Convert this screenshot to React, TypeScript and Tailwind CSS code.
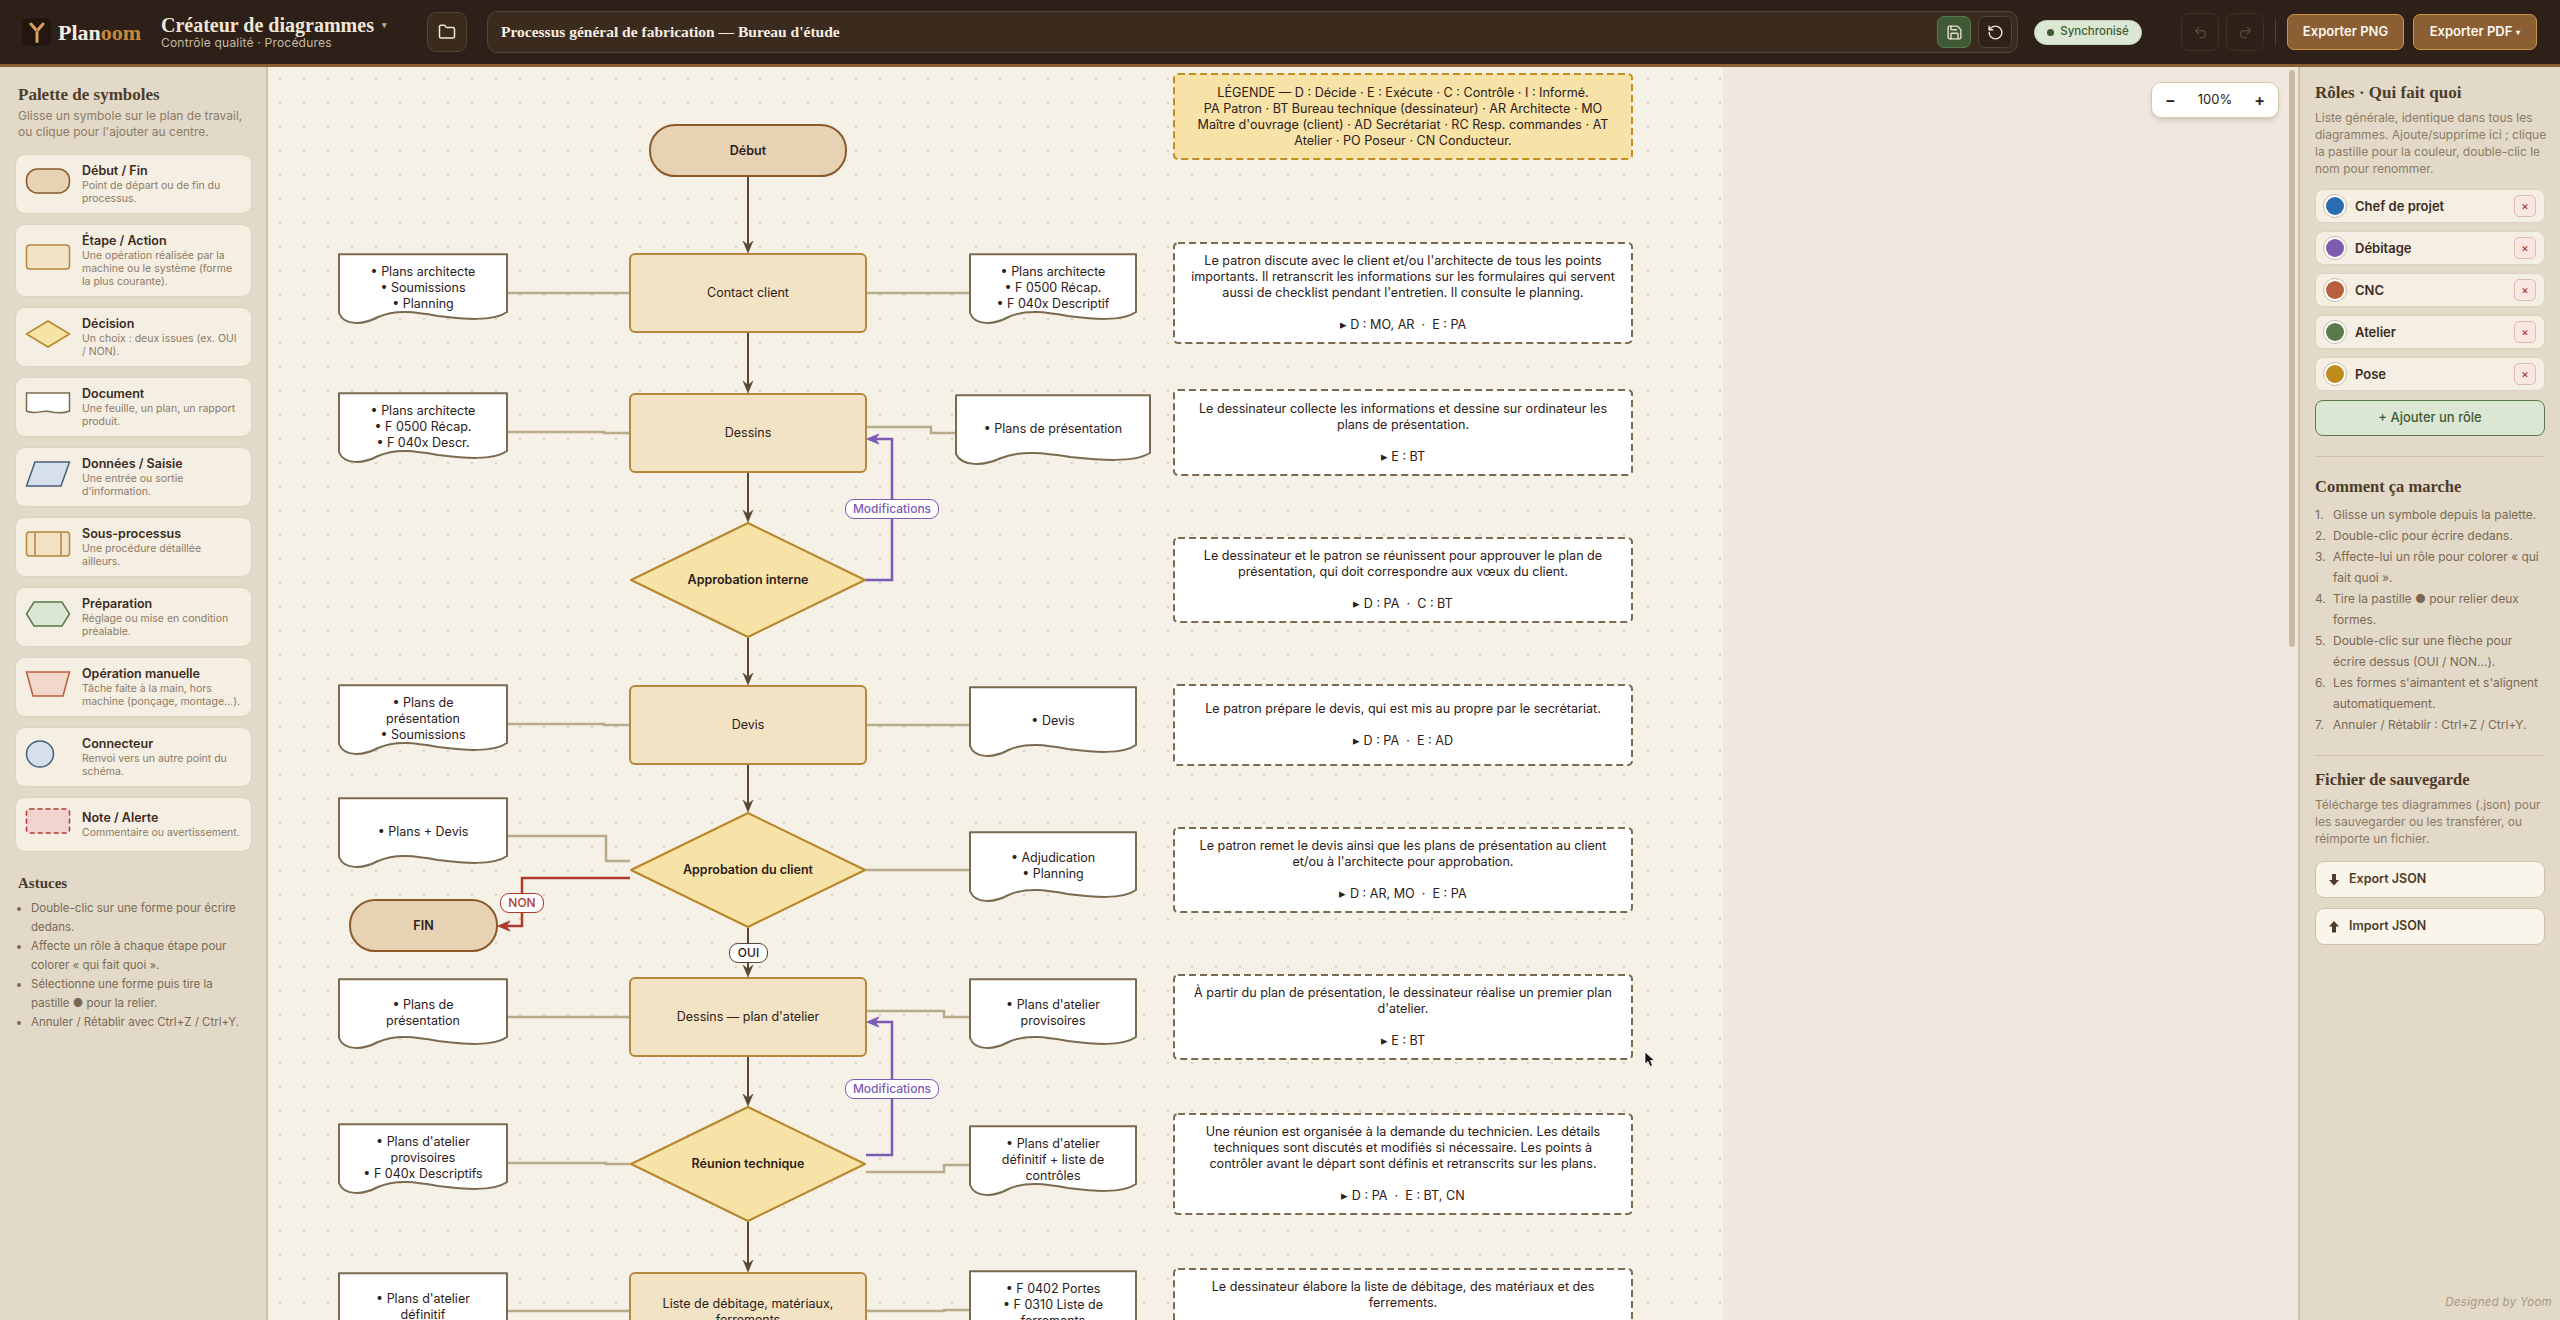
import React from "react";
import { Folder, Save, RotateCcw, Undo2, Redo2 } from "lucide-react";

const serif = "font-['Liberation_Serif',serif]";

// everything on the canvas is in page pixels, the paper starts at 268,67
const OX = 268;
const OY = 67;

const palette = [
  { title: "Début / Fin", desc: "Point de départ ou de fin du\nprocessus.", sym: "pill" },
  { title: "Étape / Action", desc: "Une opération réalisée par la\nmachine ou le système (forme\nla plus courante).", sym: "box" },
  { title: "Décision", desc: "Un choix : deux issues (ex. OUI\n/ NON).", sym: "diamond" },
  { title: "Document", desc: "Une feuille, un plan, un rapport\nproduit.", sym: "doc" },
  { title: "Données / Saisie", desc: "Une entrée ou sortie\nd'information.", sym: "data" },
  { title: "Sous-processus", desc: "Une procédure détaillée\nailleurs.", sym: "sub" },
  { title: "Préparation", desc: "Réglage ou mise en condition\npréalable.", sym: "prep" },
  { title: "Opération manuelle", desc: "Tâche faite à la main, hors\nmachine (ponçage, montage...).", sym: "manual" },
  { title: "Connecteur", desc: "Renvoi vers un autre point du\nschéma.", sym: "conn" },
  { title: "Note / Alerte", desc: "Commentaire ou avertissement.", sym: "note" },
];

const roles = [
  { name: "Chef de projet", color: "bg-[#2b6cb0]" },
  { name: "Débitage", color: "bg-[#7c5bb0]" },
  { name: "CNC", color: "bg-[#b5603a]" },
  { name: "Atelier", color: "bg-[#5a7a4d]" },
  { name: "Pose", color: "bg-[#bf8a1c]" },
];

const steps = [
  "Glisse un symbole depuis la palette.",
  "Double-clic pour écrire dedans.",
  "Affecte-lui un rôle pour colorer « qui\nfait quoi ».",
  "Tire la pastille ● pour relier deux\nformes.",
  "Double-clic sur une flèche pour\nécrire dessus (OUI / NON...).",
  "Les formes s'aimantent et s'alignent\nautomatiquement.",
  "Annuler / Rétablir : Ctrl+Z / Ctrl+Y.",
];

const docs = [
  { x: 338, y: 253, w: 170, text: "• Plans architecte\n• Soumissions\n• Planning" },
  { x: 969, y: 253, w: 168, text: "• Plans architecte\n• F 0500 Récap.\n• F 040x Descriptif" },
  { x: 338, y: 392, w: 170, text: "• Plans architecte\n• F 0500 Récap.\n• F 040x Descr." },
  { x: 955, y: 394, w: 196, text: "• Plans de présentation" },
  { x: 338, y: 684, w: 170, text: "• Plans de\nprésentation\n• Soumissions" },
  { x: 969, y: 686, w: 168, text: "• Devis" },
  { x: 338, y: 797, w: 170, text: "• Plans + Devis" },
  { x: 969, y: 831, w: 168, text: "• Adjudication\n• Planning" },
  { x: 338, y: 978, w: 170, text: "• Plans de\nprésentation" },
  { x: 969, y: 978, w: 168, text: "• Plans d'atelier\nprovisoires" },
  { x: 338, y: 1123, w: 170, text: "• Plans d'atelier\nprovisoires\n• F 040x Descriptifs" },
  { x: 969, y: 1125, w: 168, text: "• Plans d'atelier\ndéfinitif + liste de\ncontrôles" },
  { x: 338, y: 1272, w: 170, text: "• Plans d'atelier\ndéfinitif" },
  { x: 969, y: 1270, w: 168, text: "• F 0402 Portes\n• F 0310 Liste de\nferrements" },
];

const boxes = [
  { y: 253, text: "Contact client" },
  { y: 393, text: "Dessins" },
  { y: 685, text: "Devis" },
  { y: 977, text: "Dessins — plan d'atelier" },
  { y: 1272, text: "Liste de débitage, matériaux,\nferrements" },
];

const diamonds = [
  { y: 522, text: "Approbation interne" },
  { y: 812, text: "Approbation du client" },
  { y: 1106, text: "Réunion technique" },
];

const notes = [
  { y: 242, h: 102, text: "Le patron discute avec le client et/ou l'architecte de tous les points\nimportants. Il retranscrit les informations sur les formulaires qui servent\naussi de checklist pendant l'entretien. Il consulte le planning.\n\n▸ D : MO, AR \u00a0·\u00a0 E : PA" },
  { y: 389, h: 87, text: "Le dessinateur collecte les informations et dessine sur ordinateur les\nplans de présentation.\n\n▸ E : BT" },
  { y: 537, h: 86, text: "Le dessinateur et le patron se réunissent pour approuver le plan de\nprésentation, qui doit correspondre aux vœux du client.\n\n▸ D : PA \u00a0·\u00a0 C : BT" },
  { y: 684, h: 82, text: "Le patron prépare le devis, qui est mis au propre par le secrétariat.\n\n▸ D : PA \u00a0·\u00a0 E : AD" },
  { y: 827, h: 86, text: "Le patron remet le devis ainsi que les plans de présentation au client\net/ou à l'architecte pour approbation.\n\n▸ D : AR, MO \u00a0·\u00a0 E : PA" },
  { y: 974, h: 86, text: "À partir du plan de présentation, le dessinateur réalise un premier plan\nd'atelier.\n\n▸ E : BT" },
  { y: 1113, h: 102, text: "Une réunion est organisée à la demande du technicien. Les détails\ntechniques sont discutés et modifiés si nécessaire. Les points à\ncontrôler avant le départ sont définis et retranscrits sur les plans.\n\n▸ D : PA \u00a0·\u00a0 E : BT, CN" },
  { y: 1268, h: 86, text: "Le dessinateur élabore la liste de débitage, des matériaux et des\nferrements.\n\n▸ E : BT" },
];

const flowLines = [
  [177, 253], [333, 393], [473, 522], [638, 685], [765, 812], [928, 977], [1057, 1106], [1222, 1272],
];

const dataWires = [
  "M508 293H629", "M867 293H969",
  "M508 432H604V433H629", "M867 427H931V433H955",
  "M508 724H604V725H629", "M867 725H969",
  "M508 836H606V861H630", "M865 870H969",
  "M508 1017H629", "M867 1011H944V1017H969",
  "M508 1163H606V1164H630", "M866 1172H944V1165H969",
  "M508 1311H629", "M867 1311H944V1310H969",
];

function Symbol({ kind }: { kind: string }) {
  return (
    <svg width="46" height="28" viewBox="0 0 46 28" className="shrink-0">
      {kind === "pill" && <rect x="1.5" y="2" width="43" height="24" rx="11" fill="#e8d2b4" stroke="#8b5a2b" strokeWidth="1.5" />}
      {kind === "box" && <rect x="1.5" y="2" width="43" height="24" rx="3" fill="#f1e3c4" stroke="#b5873f" strokeWidth="1.5" />}
      {kind === "diamond" && <polygon points="23,1 44.5,14 23,27 1.5,14" fill="#f7e2a8" stroke="#b8862a" strokeWidth="1.5" />}
      {kind === "doc" && <path d="M1.5 3H44.5V21C38 24 31 23 24 21.5C17 20 9 25 1.5 21Z" fill="#fff" stroke="#7a6a50" strokeWidth="1.5" />}
      {kind === "data" && <polygon points="10,2 44.5,2 36,26 1.5,26" fill="#d6e0ea" stroke="#46607c" strokeWidth="1.5" />}
      {kind === "sub" && (
        <>
          <rect x="1.5" y="2" width="43" height="24" rx="3" fill="#f1e3c4" stroke="#b5873f" strokeWidth="1.5" />
          <path d="M10 2V26M36 2V26" stroke="#b5873f" strokeWidth="1.5" />
        </>
      )}
      {kind === "prep" && <polygon points="9,2 37,2 44.5,14 37,26 9,26 1.5,14" fill="#dbe6d3" stroke="#5a7a4d" strokeWidth="1.5" />}
      {kind === "manual" && <polygon points="1.5,2 44.5,2 38,26 8,26" fill="#f2d8cb" stroke="#b5603a" strokeWidth="1.5" />}
      {kind === "conn" && <ellipse cx="15" cy="14" rx="13.5" ry="13" fill="#d6e0ea" stroke="#46607c" strokeWidth="1.5" />}
      {kind === "note" && <rect x="1.5" y="2" width="43" height="24" rx="3" fill="#f2d3d0" stroke="#b03a2e" strokeWidth="1.5" strokeDasharray="5 3" />}
    </svg>
  );
}

function Logo() {
  return (
    <div className="flex h-[28px] w-[29px] items-center justify-center rounded-[7px] bg-[#21170f]">
      <svg width="16" height="21" viewBox="0 0 16 21">
        <path d="M2 2L8 9M14 2L8 9M8 9V19.5" fill="none" stroke="#dd9f58" strokeWidth="3" strokeLinecap="round" />
        <circle cx="8" cy="8.5" r="1.3" fill="#8a7a66" />
      </svg>
    </div>
  );
}

function DocNode({ x, y, w, text }: { x: number; y: number; w: number; text: string }) {
  const c = w / 170;
  return (
    <div className="absolute h-[71px]" style={{ left: x - OX, top: y - OY, width: w }}>
      <svg className="absolute inset-0" width={w} height="71" viewBox={`0 0 ${w} 71`}>
        <path
          d={`M1 1.2H${w - 1}V59C${155 * c} 69 ${125 * c} 66 ${100 * c} 63C${78 * c} 59 ${58 * c} 56 ${40 * c} 64C${25 * c} 72 ${6 * c} 73 1 60Z`}
          fill="#fff"
          stroke="#7a6a50"
          strokeWidth="2"
          strokeLinejoin="round"
        />
      </svg>
      <div className="absolute inset-x-0 top-0 flex h-[69px] items-center justify-center whitespace-pre-line text-center text-[12.5px] leading-4 text-[#2c2018]">
        {text}
      </div>
    </div>
  );
}

function NoteNode({ y, h, text, legend }: { y: number; h: number; text: string; legend?: boolean }) {
  return (
    <div className="absolute w-[460px]" style={{ left: 1173 - OX, top: y - OY, height: h }}>
      <svg className="absolute inset-0" width="460" height={h}>
        <rect
          x="1"
          y="1"
          width="458"
          height={h - 2}
          rx="4"
          fill={legend ? "#f7e2a8" : "#fff"}
          stroke={legend ? "#c08f1f" : "#7a6a50"}
          strokeWidth="2"
          strokeDasharray="7 4"
        />
      </svg>
      <div className="absolute inset-0 flex items-center justify-center whitespace-pre-line text-center text-[12.6px] leading-4 text-[#2c2018]">
        {text}
      </div>
    </div>
  );
}

function Tag({ x, y, w, className, children }: { x: number; y: number; w: number; className: string; children: React.ReactNode }) {
  return (
    <div
      className={`absolute flex h-5 items-center justify-center rounded-[9px] border bg-white text-[12px] font-medium ${className}`}
      style={{ left: x - OX, top: y - OY, width: w }}
    >
      {children}
    </div>
  );
}

function Canvas() {
  return (
    <div className="absolute left-0 top-0 h-[1300px] w-[1455px] bg-[#f6f1e7] bg-[radial-gradient(circle,#d9d2bf_1.2px,transparent_1.3px)] bg-[size:24px_24px]">
      <svg className="absolute inset-0" width="1455" height="1300">
        <g transform={`translate(${-OX},${-OY})`} fill="none">
          {dataWires.map((d) => (
            <path key={d} d={d} stroke="#b8ab8a" strokeWidth="2.5" />
          ))}
          {flowLines.map(([a, b]) => (
            <g key={a}>
              <path d={`M748 ${a}V${b - 5}`} stroke="#5a4632" strokeWidth="2" />
              <path d={`M748 ${b}L743 ${b - 12}L748 ${b - 8}L753 ${b - 12}Z`} fill="#5a4632" stroke="#5a4632" strokeWidth="0.5" />
            </g>
          ))}
          <path d="M865 580H892V439H872" stroke="#7a5bb5" strokeWidth="2.5" />
          <path d="M867 439L879 434L875 439L879 444Z" fill="#7a5bb5" stroke="#7a5bb5" />
          <path d="M866 1155H892V1022H872" stroke="#7a5bb5" strokeWidth="2.5" />
          <path d="M867 1022L879 1017L875 1022L879 1027Z" fill="#7a5bb5" stroke="#7a5bb5" />
          <path d="M630 878H522V926H503" stroke="#b03a2e" strokeWidth="2.5" />
          <path d="M498 926L510 921L506 926L510 931Z" fill="#b03a2e" stroke="#b03a2e" />
        </g>
      </svg>

      {/* pills */}
      <div
        className="absolute flex h-[53px] w-[198px] items-center justify-center rounded-[26px] border-2 border-[#8b5a2b] bg-[#e8d2b4] pt-[2px] text-[12.5px] font-semibold text-[#2c2018]"
        style={{ left: 649 - OX, top: 124 - OY }}
      >
        Début
      </div>
      <div
        className="absolute flex h-[53px] w-[149px] items-center justify-center rounded-[26px] border-2 border-[#8b5a2b] bg-[#e8d2b4] pt-[2px] text-[12.5px] font-semibold text-[#2c2018]"
        style={{ left: 349 - OX, top: 899 - OY }}
      >
        FIN
      </div>

      {boxes.map((b) => (
        <div
          key={b.y}
          className="absolute flex h-20 w-[238px] items-center justify-center whitespace-pre-line rounded-[6px] border-2 border-[#b5873f] bg-[#f1e3c4] text-center text-[12.5px] leading-4 text-[#2c2018]"
          style={{ left: 629 - OX, top: b.y - OY }}
        >
          {b.text}
        </div>
      ))}

      {diamonds.map((d) => (
        <div key={d.y} className="absolute h-[116px] w-[236px]" style={{ left: 630 - OX, top: d.y - OY }}>
          <svg className="absolute inset-0" width="236" height="116">
            <polygon points="118,1 235,58 118,115 1,58" fill="#f7e2a8" stroke="#b8862a" strokeWidth="2" strokeLinejoin="round" />
          </svg>
          <div className="absolute inset-0 flex items-center justify-center text-[12.5px] font-semibold text-[#2c2018]">{d.text}</div>
        </div>
      ))}

      {docs.map((d) => (
        <DocNode key={`${d.x}-${d.y}`} {...d} />
      ))}

      <NoteNode
        legend
        y={73}
        h={87}
        text={"LÉGENDE — D : Décide · E : Exécute · C : Contrôle · I : Informé.\nPA Patron · BT Bureau technique (dessinateur) · AR Architecte · MO\nMaître d'ouvrage (client) · AD Secrétariat · RC Resp. commandes · AT\nAtelier · PO Poseur · CN Conducteur."}
      />
      {notes.map((n) => (
        <NoteNode key={n.y} {...n} />
      ))}

      <Tag x={845} y={499} w={94} className="border-[#7a5bb5] text-[#7a5bb5]">Modifications</Tag>
      <Tag x={845} y={1079} w={94} className="border-[#7a5bb5] text-[#7a5bb5]">Modifications</Tag>
      <Tag x={500} y={893} w={44} className="border-[#b03a2e] text-[#b03a2e]">NON</Tag>
      <Tag x={729} y={943} w={39} className="border-[#5a4632] text-[#2c2018]">OUI</Tag>

      {/* mouse pointer caught by the capture */}
      <svg className="absolute" style={{ left: 1644 - OX, top: 1051 - OY }} width="12" height="17" viewBox="0 0 12 17">
        <path d="M1 1V13L4 10.5L6 15.5L8.5 14.5L6.5 9.5H10.5Z" fill="#111" stroke="#fff" strokeWidth="0.8" />
      </svg>
    </div>
  );
}

export default function App() {
  return (
    <div className="flex h-[1320px] w-full flex-col overflow-hidden bg-[#f0e8de] font-['Inter',sans-serif] text-[#2c2018]">
      {/* top bar */}
      <header className="flex h-[67px] shrink-0 items-center border-b-[3px] border-[#8b5e34] bg-[#2c2018] pl-[22px] pr-[22px]">
        <Logo />
        <div className={`ml-[7px] w-[97px] text-[22px] font-bold text-[#f5ede0] ${serif}`}>
          Plan<span className="text-[#c8873f]">oom</span>
        </div>
        <div className="ml-[6px] w-[266px]">
          <div className={`flex items-center gap-2 text-[20px] font-bold leading-[22px] text-[#f0e6d6] ${serif}`}>
            Créateur de diagrammes <span className="text-[9px] text-[#b9a88f]">▾</span>
          </div>
          <div className="text-[12px] leading-[14px] tracking-[0.2px] text-[#c8b9a2]">Contrôle qualité · Procédures</div>
        </div>
        <button className="flex h-10 w-10 items-center justify-center rounded-[9px] border border-[#55412e] bg-[#3a2b1e] text-[#f0e6d6]">
          <Folder size={18} />
        </button>
        <div className="ml-5 flex h-[42px] w-[1531px] items-center rounded-[10px] border border-[#55412e] bg-[#3a2b1e] pl-[13px] pr-[5px]">
          <div className={`flex-1 text-[15.5px] font-bold text-[#f5ede0] ${serif}`}>Processus général de fabrication — Bureau d'étude</div>
          <button className="flex h-8 w-[34px] items-center justify-center rounded-[7px] border border-[#5a7a4d] bg-[#3f5a34] text-[#e6ddc8]">
            <Save size={17} />
          </button>
          <button className="ml-[7px] flex h-8 w-[34px] items-center justify-center rounded-[7px] border border-[#55412e] bg-[#2c2018] text-[#f0e6d6]">
            <RotateCcw size={17} />
          </button>
        </div>
        <div className="ml-4 flex h-[25px] w-[108px] items-center justify-center gap-[6px] rounded-full border border-[#c5d5ba] bg-[#dbe6d3] text-[11.5px] font-medium text-[#3d5c33]">
          <span className="h-[7px] w-[7px] rounded-full bg-[#3d5c33]" />
          Synchronisé
        </div>
        <button className="ml-[39px] flex h-[38px] w-[38px] items-center justify-center rounded-[8px] border border-[#3f3024] text-[#5b4a39]">
          <Undo2 size={15} />
        </button>
        <button className="ml-[7px] flex h-[38px] w-[38px] items-center justify-center rounded-[8px] border border-[#3f3024] text-[#5b4a39]">
          <Redo2 size={15} />
        </button>
        <div className="ml-[11px] h-[26px] w-px bg-[#55412e]" />
        <button className="ml-[11px] flex h-9 w-[117px] items-center justify-center rounded-[7px] border border-[#c8963e] bg-[#8b5e34] text-[13px] font-semibold text-[#fdf8ef]">
          Exporter PNG
        </button>
        <button className="ml-[9px] flex h-9 w-[124px] items-center justify-center gap-1 rounded-[7px] border border-[#c8963e] bg-[#8b5e34] text-[13px] font-semibold text-[#fdf8ef]">
          Exporter PDF <span className="text-[8px]">▾</span>
        </button>
      </header>

      <div className="flex min-h-0 flex-1">
        {/* palette */}
        <aside className="w-[268px] shrink-0 border-r-2 border-[#cfc1a5] bg-[#e2d9c8] pl-[15px] pr-[14px]">
          <h2 className={`ml-[3px] mt-[18px] text-[17px] font-bold leading-[20px] text-[#4d3c2b] ${serif}`}>Palette de symboles</h2>
          <p className="ml-[3px] mt-[3px] whitespace-pre-line text-[12px] leading-4 text-[#8c7b66]">
            {"Glisse un symbole sur le plan de travail,\nou clique pour l'ajouter au centre."}
          </p>
          <div className="mt-[14px] flex flex-col gap-[10px]">
            {palette.map((p) => (
              <div key={p.title} className="flex min-h-[52px] items-center gap-[11px] rounded-[10px] border border-[#ddd2bd] bg-[#f5eee2] pb-[8px] pl-[9px] pr-1 pt-[9px]">
                <div className="mb-[8px]">
                  <Symbol kind={p.sym} />
                </div>
                <div>
                  <div className="text-[12.5px] font-semibold leading-[14px] text-[#3a2b1e]">{p.title}</div>
                  <div className="mt-px whitespace-pre-line text-[10.5px] leading-[13px] text-[#8c7b66]">{p.desc}</div>
                </div>
              </div>
            ))}
          </div>
          <h3 className={`ml-[3px] mt-[22px] text-[15px] font-bold leading-[18px] text-[#4d3c2b] ${serif}`}>Astuces</h3>
          <ul className="mt-[7px] list-disc pl-[16px] text-[11.5px] leading-[19px] text-[#7a6a55] marker:text-[#7a6a55]">
            <li className="whitespace-pre-line">{"Double-clic sur une forme pour écrire\ndedans."}</li>
            <li className="whitespace-pre-line">{"Affecte un rôle à chaque étape pour\ncolorer « qui fait quoi »."}</li>
            <li className="whitespace-pre-line">{"Sélectionne une forme puis tire la\npastille ● pour la relier."}</li>
            <li>Annuler / Rétablir avec Ctrl+Z / Ctrl+Y.</li>
          </ul>
        </aside>

        {/* work area */}
        <main className="relative min-w-0 flex-1 overflow-hidden">
          <Canvas />
          <div className="absolute left-[1883px] top-[15px] flex h-[36px] w-[128px] items-center justify-between rounded-[10px] border border-[#d9c9a8] bg-white px-[13px] text-[13px] shadow-md">
            <span className="text-[16px] font-semibold leading-none">−</span>
            <span>100%</span>
            <span className="text-[16px] font-semibold leading-none">+</span>
          </div>
          <div className="absolute left-[2021px] top-[3px] h-[577px] w-[6px] rounded-full bg-[#c9bca4]" />
        </main>

        {/* right panel */}
        <aside className="relative w-[262px] shrink-0 border-l-2 border-[#cfc1a5] bg-[#e2d9c8] pl-[15px] pr-[15px]">
          <h2 className={`mt-[16px] text-[17px] font-bold leading-[20px] text-[#4d3c2b] ${serif}`}>Rôles · Qui fait quoi</h2>
          <p className="mt-[6px] whitespace-pre text-[12px] leading-[17px] text-[#8c7b66]">
            {"Liste générale, identique dans tous les\ndiagrammes. Ajoute/supprime ici ; clique\nla pastille pour la couleur, double-clic le\nnom pour renommer."}
          </p>
          <div className="mt-[12px] flex flex-col gap-2">
            {roles.map((r) => (
              <div key={r.name} className="flex h-[34px] items-center rounded-[8px] border border-[#ddd2bd] bg-[#f5eee2] pl-[7px] pr-[8px]">
                <span className="flex h-6 w-6 items-center justify-center rounded-full border border-[#c9bca4] bg-white">
                  <span className={`h-[18px] w-[18px] rounded-full ${r.color}`} />
                </span>
                <span className="ml-2 flex-1 pt-px text-[13px] font-semibold text-[#3a2b1e]">{r.name}</span>
                <span className="flex h-[22px] w-[22px] items-center justify-center rounded-[5px] border border-[#e3b9b4] bg-[#f7e6e1] text-[11px] font-medium text-[#b03a2e]">×</span>
              </div>
            ))}
          </div>
          <button className="mt-[9px] h-[36px] w-full rounded-[8px] border border-[#5a7a4d] bg-[#dbe6d3] text-[13px] font-medium text-[#3d5c33]">+ Ajouter un rôle</button>
          <div className="mt-[20px] h-px bg-[#cfc1a5]" />
          <h3 className={`mt-[20px] text-[16.5px] font-bold leading-[20px] text-[#4d3c2b] ${serif}`}>Comment ça marche</h3>
          <ol className="mt-[7px] text-[12px] leading-[21px] text-[#7a6a55]">
            {steps.map((s, i) => (
              <li key={s} className="flex">
                <span className="w-[18px] shrink-0">{i + 1}.</span>
                <span className="whitespace-pre">{s}</span>
              </li>
            ))}
          </ol>
          <div className="mt-[20px] h-px bg-[#cfc1a5]" />
          <h3 className={`mt-[14px] text-[16.5px] font-bold leading-[20px] text-[#4d3c2b] ${serif}`}>Fichier de sauvegarde</h3>
          <p className="mt-[6px] whitespace-pre text-[12px] leading-[17px] text-[#8c7b66]">
            {"Télécharge tes diagrammes (.json) pour\nles sauvegarder ou les transférer, ou\nréimporte un fichier."}
          </p>
          <div className="mt-[14px] flex flex-col gap-[10px]">
            {[
              { label: "Export JSON", d: "M4 1H8V7H11L6 12.5L1 7H4Z" },
              { label: "Import JSON", d: "M4 12.5H8V6.5H11L6 1L1 6.5H4Z" },
            ].map((b) => (
              <button key={b.label} className="flex h-[37px] w-full items-center gap-[9px] rounded-[9px] border border-[#cfc1a5] bg-[#faf5ea] pl-[12px] text-[12.5px] font-semibold text-[#4d3c2b]">
                <svg width="12" height="14" viewBox="0 0 12 14">
                  <path d={b.d} fill="#4d3c2b" />
                </svg>
                {b.label}
              </button>
            ))}
          </div>
          <div className="absolute bottom-[9px] right-[8px] text-[11.5px] italic tracking-[0.3px] text-[#a89880]">Designed by Yoom</div>
        </aside>
      </div>
    </div>
  );
}
